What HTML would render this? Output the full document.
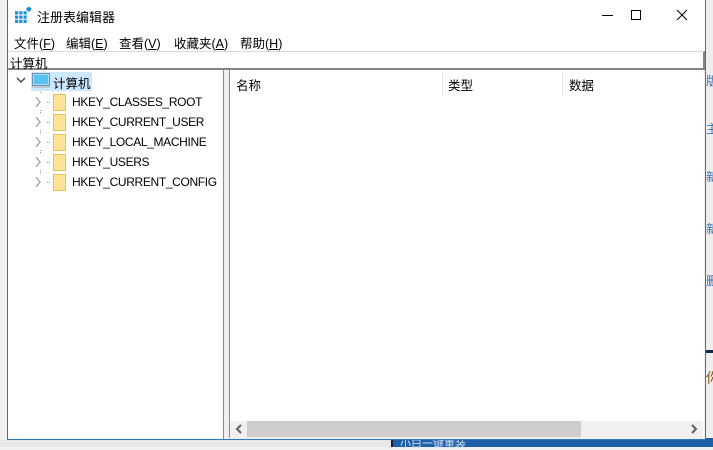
<!DOCTYPE html>
<html><head><meta charset="utf-8"><style>
*{margin:0;padding:0;box-sizing:border-box}
body{width:713px;height:447px;overflow:hidden;background:#f0f0f0;font-family:"Liberation Sans","Noto Sans CJK SC",sans-serif;font-size:12px;color:#000;position:relative}
.abs{position:absolute}
.win{left:7px;top:0;width:699px;height:440px;border:1px solid #2b79c5;background:#f0f0f0;border-top:none}
.tree div{position:absolute;left:0;height:20px;line-height:20px;white-space:nowrap;font-size:12px;letter-spacing:-0.35px}
.menu{font-size:12.5px}
</style></head><body>
<div class="abs" style="left:706px;top:0;width:7px;height:447px;background:#eeeeee"></div>
<div class="abs" style="left:706px;top:72px;font-size:12px;color:#3a6fb0;">版</div>
<div class="abs" style="left:706px;top:120px;font-size:12px;color:#3a6fb0;">主</div>
<div class="abs" style="left:706px;top:168px;font-size:12px;color:#3a6fb0;">新</div>
<div class="abs" style="left:706px;top:220px;font-size:12px;color:#3a6fb0;">新</div>
<div class="abs" style="left:706px;top:272px;font-size:12px;color:#3a6fb0;">删</div>
<div class="abs" style="left:706px;top:350px;width:7px;height:3px;background:#0f2a4a"></div>
<div class="abs" style="left:706px;top:368px;font-size:14px;color:#8a5a2a;">你</div>
<div class="abs" style="left:706px;top:438px;width:7px;height:9px;background:#1e5fa8"></div>
<div class="abs" style="left:0;top:440px;width:391px;height:7px;background:#e8e8e8"></div>
<div class="abs" style="left:391px;top:440px;width:322px;height:7px;background:#1e5fa8"></div>
<div class="abs" style="left:391px;top:440px;width:2px;height:7px;background:#0a1f3a"></div>
<div class="abs" style="left:400px;top:438px;font-size:11px;color:#cfe0f5;line-height:12px">小白一键重装</div>

<div class="abs win"></div>
<div class="abs" style="left:8px;top:0;width:697px;height:30px;background:#fff"></div>
<svg class="abs" style="left:15px;top:7px" width="17" height="17" viewBox="0 0 16 16">
<g fill="#1a8fd8"><rect x="0" y="4" width="3" height="3"/><rect x="4" y="4" width="3" height="3"/><rect x="8" y="4" width="3" height="3"/>
<rect x="0" y="8" width="3" height="3"/><rect x="4" y="8" width="3" height="3"/><rect x="8" y="8" width="3" height="3"/>
<rect x="0" y="12" width="3" height="3"/><rect x="4" y="12" width="3" height="3"/><rect x="8" y="12" width="3" height="3"/>
<rect x="11" y="0" width="4" height="4" transform="rotate(45 13 2)"/></g></svg>
<div class="abs" style="left:37px;top:7px;font-size:13px">注册表编辑器</div>
<svg class="abs" style="left:580px;top:8px" width="120" height="16" viewBox="0 0 120 16" fill="none" stroke="#000" stroke-width="1">
<line x1="22" y1="7.5" x2="33" y2="7.5"/>
<rect x="51.5" y="2.5" width="9" height="9"/>
<line x1="97" y1="2" x2="107" y2="12"/><line x1="107" y1="2" x2="97" y2="12"/></svg>
<div class="abs" style="left:8px;top:30px;width:697px;height:21px;background:#fff"></div>
<div class="abs menu" style="left:14px;top:33px">文件(<u>F</u>)</div>
<div class="abs menu" style="left:66px;top:33px">编辑(<u>E</u>)</div>
<div class="abs menu" style="left:119px;top:33px">查看(<u>V</u>)</div>
<div class="abs menu" style="left:174px;top:33px">收藏夹(<u>A</u>)</div>
<div class="abs menu" style="left:240px;top:33px">帮助(<u>H</u>)</div>
<div class="abs" style="left:8px;top:51px;width:697px;height:19px;background:#fff;border-top:1px solid #dadada;border-bottom:2px solid #848484;border-right:2px solid #848484"></div>
<div class="abs" style="left:10px;top:53px;font-size:12.5px">计算机</div>
<div class="abs" style="left:8px;top:70px;width:216px;height:369px;background:#fff;border-right:1px solid #8a8a8a"></div>
<div class="abs" style="left:224px;top:70px;width:5px;height:369px;background:#f0f0f0"></div>
<div class="abs" style="left:31px;top:72px;width:61px;height:19px;background:#cce8ff"></div>
<svg class="abs" style="left:15px;top:76px" width="12" height="10"><polyline points="2,2 6,6 10,2" fill="none" stroke="#444" stroke-width="1.4"/></svg>
<svg class="abs" style="left:32px;top:73px" width="18" height="17" viewBox="0 0 18 17"><rect x="0.5" y="0.5" width="17" height="12" fill="#a9dcf5" stroke="#6a8fb0"/><rect x="2" y="2" width="14" height="9" fill="#59c1ef"/><rect x="0" y="13" width="18" height="2" fill="#b9c7d4"/></svg>
<div class="abs" style="left:53px;top:73px;font-size:12.5px">计算机</div>
<div class="tree abs" style="left:0;top:0">
<div style="top:92px;left:72px">HKEY_CLASSES_ROOT</div>
<div style="top:112px;left:72px">HKEY_CURRENT_USER</div>
<div style="top:132px;left:72px">HKEY_LOCAL_MACHINE</div>
<div style="top:152px;left:72px">HKEY_USERS</div>
<div style="top:172px;left:72px">HKEY_CURRENT_CONFIG</div>
</div>
<svg class="abs" style="left:34px;top:91px" width="40" height="102">
<g fill="none" stroke="#a6a6a6" stroke-width="1.4">
<polyline points="2,6 6,11 2,16"/><polyline points="2,26 6,31 2,36"/><polyline points="2,46 6,51 2,56"/><polyline points="2,66 6,71 2,76"/><polyline points="2,86 6,91 2,96"/></g>
<g fill="#999"><rect x="13" y="11" width="1" height="1"/><rect x="15" y="11" width="1" height="1"/><rect x="13" y="31" width="1" height="1"/><rect x="15" y="31" width="1" height="1"/><rect x="13" y="51" width="1" height="1"/><rect x="15" y="51" width="1" height="1"/><rect x="13" y="71" width="1" height="1"/><rect x="15" y="71" width="1" height="1"/><rect x="13" y="91" width="1" height="1"/><rect x="15" y="91" width="1" height="1"/>
<rect x="6" y="1" width="1" height="1"/><rect x="6" y="19" width="1" height="1"/><rect x="6" y="21" width="1" height="1"/><rect x="6" y="39" width="1" height="1"/><rect x="6" y="41" width="1" height="1"/><rect x="6" y="59" width="1" height="1"/><rect x="6" y="61" width="1" height="1"/><rect x="6" y="79" width="1" height="1"/><rect x="6" y="81" width="1" height="1"/></g>
<g fill="#fbe497" stroke="#e3c35e"><rect x="19.5" y="3.5" width="12" height="16"/><rect x="19.5" y="23.5" width="12" height="16"/><rect x="19.5" y="43.5" width="12" height="16"/><rect x="19.5" y="63.5" width="12" height="16"/><rect x="19.5" y="83.5" width="12" height="16"/></g>
</svg>
<div class="abs" style="left:229px;top:70px;width:475px;height:369px;background:#fff;border-left:1px solid #8a8a8a;border-bottom:2px solid #f0f0f0"></div>
<div class="abs" style="left:236px;top:75px;font-size:12.5px">名称</div>
<div class="abs" style="left:442px;top:72px;width:1px;height:24px;background:#e5e5e5"></div>
<div class="abs" style="left:448px;top:75px;font-size:12.5px">类型</div>
<div class="abs" style="left:562px;top:72px;width:1px;height:24px;background:#e5e5e5"></div>
<div class="abs" style="left:569px;top:75px;font-size:12.5px">数据</div>
<div class="abs" style="left:230px;top:421px;width:473px;height:16px;background:#f0f0f0"></div>
<div class="abs" style="left:247px;top:421px;width:334px;height:16px;background:#cdcdcd"></div>
<svg class="abs" style="left:233px;top:424px" width="12" height="10"><polyline points="8,1 4,5 8,9" fill="none" stroke="#606060" stroke-width="2"/></svg>
<svg class="abs" style="left:688px;top:424px" width="12" height="10"><polyline points="4,1 8,5 4,9" fill="none" stroke="#606060" stroke-width="2"/></svg>
</body></html>
